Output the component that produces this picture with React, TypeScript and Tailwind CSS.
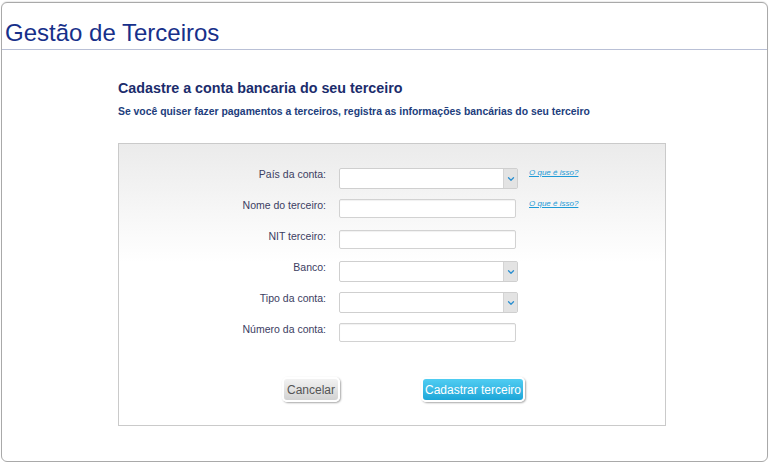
import { ChevronDown } from 'lucide-react';

const rows = [
  { label: 'País da conta:', kind: 'select', help: true },
  { label: 'Nome do terceiro:', kind: 'input', help: true },
  { label: 'NIT terceiro:', kind: 'input', help: false },
  { label: 'Banco:', kind: 'select', help: false },
  { label: 'Tipo da conta:', kind: 'select', help: false },
  { label: 'Número da conta:', kind: 'input', help: false },
];

function Field({ kind }: { kind: string }) {
  if (kind === 'select') {
    return (
      <div className="flex h-[21px] w-[179px] rounded-[2px] border border-[#cfcfcf] bg-white">
        <div className="flex-1" />
        <div className="flex w-[14px] items-center justify-center border-l border-[#d4d4d4] bg-[#e3e3e3]">
          <ChevronDown size={10} strokeWidth={3} className="text-[#2a8fd0]" />
        </div>
      </div>
    );
  }
  return <div className="h-[19px] w-[177px] rounded-[2px] border border-[#d2d2d2] bg-white shadow-[inset_0_1px_1px_rgba(0,0,0,0.06)]" />;
}

export default function App() {
  return (
    <div className="h-[470px] w-[773px] bg-white pl-px pt-[2px] font-['Liberation_Sans',Arial,sans-serif]">
      <div className="h-[460px] w-[767px] rounded-[6px] border border-[#a9a9a9] bg-white shadow-[0_-1px_1px_rgba(0,0,0,0.08)]">
        <div className="border-b border-[#b9c0d6] pl-[3px] pb-[2px] pt-[16px]">
          <h1 className="text-[24px] leading-[28px] text-[#17308a]">Gestão de Terceiros</h1>
        </div>

        <div className="pl-[116px] pt-[30px]">
          <h2 className="text-[14.3px] font-bold leading-[17px] text-[#1b2c6c]">Cadastre a conta bancaria do seu terceiro</h2>
          <p className="mt-[8px] text-[10.4px] font-bold leading-[13px] text-[#213d7c]">
            Se você quiser fazer pagamentos a terceiros, registra as informações bancárias do seu terceiro
          </p>

          <div className="mt-[25px] h-[283px] w-[548px] border border-[#cacaca] bg-linear-to-b from-[#ebebeb] to-white to-[42%] pt-[24px]">
            <div className="flex flex-col gap-[11px]">
              {rows.map(r => (
                <div key={r.label} className="flex h-[20px] items-start">
                  <div className="-mt-[1px] w-[207px] text-right text-[10.5px] leading-[14px] text-[#3b3d62]">{r.label}</div>
                  <div className="ml-[13px] w-[190px]">
                    <Field kind={r.kind} />
                  </div>
                  {r.help && (
                    <a className="mt-[-1px] text-[8px] italic leading-[12px] text-[#1d9ad6] underline">O que é isso?</a>
                  )}
                </div>
              ))}
            </div>

            <div className="mt-[34px] flex gap-[81px] pl-[163px]">
              <button className="h-[25px] w-[58px] rounded-[5px] border-2 border-white bg-linear-to-b from-[#f2f2f2] to-[#d2d2d2] text-[12px] text-[#555] shadow-[1px_1px_2px_rgba(0,0,0,0.35)]">
                Cancelar
              </button>
              <button className="h-[25px] w-[104px] rounded-[5px] border-2 border-white bg-linear-to-b from-[#4fcdf2] to-[#1aa6d8] text-[12px] text-white shadow-[1px_1px_2px_rgba(0,0,0,0.35)]">
                Cadastrar terceiro
              </button>
            </div>
          </div>
        </div>
      </div>
    </div>
  );
}
